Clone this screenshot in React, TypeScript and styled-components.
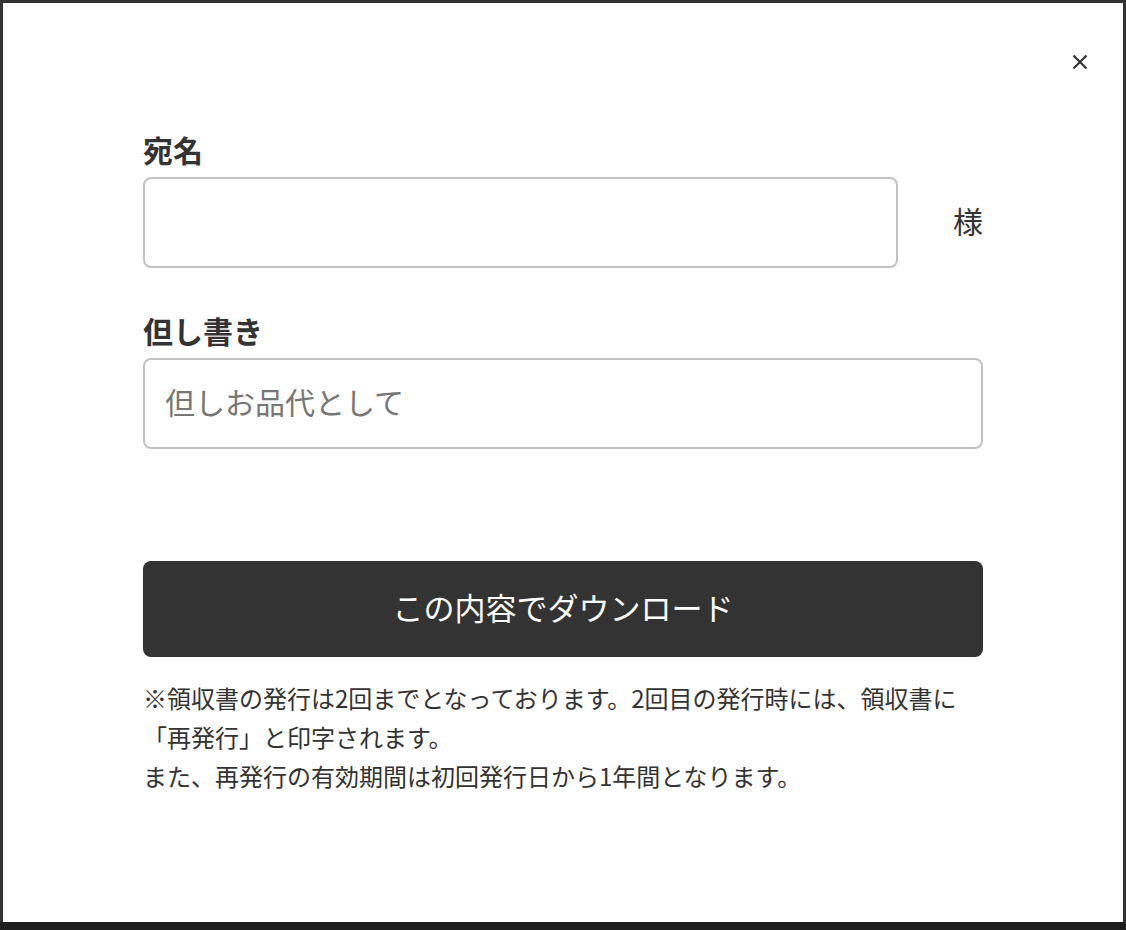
import React from 'react';
import styled, { createGlobalStyle } from 'styled-components';

const GlobalStyle = createGlobalStyle`
    html, body {
        margin: 0;
        padding: 0;
        background: #333333;
    }
    * {
        box-sizing: border-box;
    }
`;

const font = `"Noto Sans CJK JP", "Noto Sans", sans-serif`;

export default function App() {
    return (
        <>
            <GlobalStyle />
            <Backdrop>
                <Modal>
                    <CloseButton aria-label="閉じる">
                        <svg width="16" height="16" viewBox="0 0 16 16">
                            <path d="M1.5 1.5 L14.5 14.5 M14.5 1.5 L1.5 14.5" stroke="#333" strokeWidth="2.2" />
                        </svg>
                    </CloseButton>

                    <Content>
                        <Label>宛名</Label>
                        <FieldRow>
                            <TextInput type="text" />
                            <Suffix>様</Suffix>
                        </FieldRow>

                        <Label $top={44}>但し書き</Label>
                        <FieldRow>
                            <TextInput type="text" placeholder="但しお品代として" />
                        </FieldRow>

                        <DownloadButton>この内容でダウンロード</DownloadButton>

                        <Note>
                            ※領収書の発行は2回までとなっております。2回目の発行時には、領収書に「再発行」と印字されます。
                            <br />
                            また、再発行の有効期間は初回発行日から1年間となります。
                        </Note>
                    </Content>
                </Modal>
                <BottomShade />
            </Backdrop>
        </>
    );
}

const Backdrop = styled.div`
    height: 930px;
    display: flex;
    flex-direction: column;
    padding: 3px 3px 0;
    background: #333333;
`;

const Modal = styled.div`
    position: relative;
    height: 919px;
    background: #ffffff;
    flex-shrink: 0;
`;

const BottomShade = styled.div`
    flex: 1;
    margin: 0 -3px;
    background: #1e1e1e;
`;

const CloseButton = styled.button`
    position: absolute;
    top: 47px;
    right: 31px;
    width: 24px;
    height: 24px;
    padding: 0;
    display: flex;
    justify-content: center;
    align-items: center;
    border: none;
    background: none;
    cursor: pointer;
`;

const Content = styled.div`
    display: flex;
    flex-direction: column;
    padding: 128px 140px 0;
    font-family: ${font};
    color: #333333;
`;

const Label = styled.div<{ $top?: number }>`
    margin-top: ${({ $top }) => $top ?? 0}px;
    margin-bottom: 10px;
    font-size: 30px;
    font-weight: 700;
    line-height: 36px;
`;

const FieldRow = styled.div`
    display: flex;
    align-items: center;
    gap: 55px;
`;

const TextInput = styled.input`
    flex: 1;
    min-width: 0;
    height: 91px;
    padding: 0 20px 5px;
    border: 2px solid #c2c2c2;
    border-radius: 8px;
    font-family: ${font};
    font-size: 30px;
    color: #333333;
    outline: none;

    &::placeholder {
        color: #767676;
    }
`;

const Suffix = styled.span`
    padding-bottom: 6px;
    font-size: 30px;
    line-height: 1;
    color: #333333;
`;

const DownloadButton = styled.button`
    margin-top: 112px;
    height: 96px;
    padding: 0 0 6px;
    border: none;
    border-radius: 8px;
    background: #333333;
    color: #ffffff;
    font-family: ${font};
    font-size: 31px;
    cursor: pointer;
`;

const Note = styled.p`
    margin: 21px 0 0;
    font-size: 24px;
    line-height: 39px;
    color: #333333;
`;
